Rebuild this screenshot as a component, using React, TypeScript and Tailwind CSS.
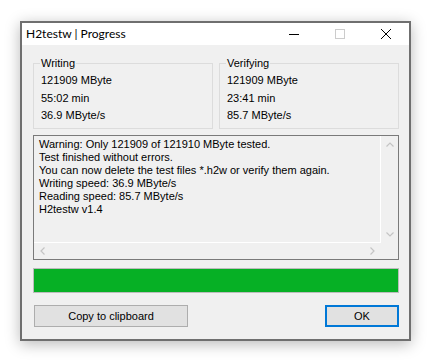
import React from "react";

const Chevron = ({ dir }: { dir: "up" | "down" | "left" | "right" }) => {
  const paths: Record<string, string> = {
    up: "M0.5 4.5 L4 1 L7.5 4.5",
    down: "M0.5 0.5 L4 4 L7.5 0.5",
    left: "M4.5 0.5 L1 4 L4.5 7.5",
    right: "M0.5 0.5 L4 4 L0.5 7.5",
  };
  const horiz = dir === "up" || dir === "down";
  return (
    <svg
      width={horiz ? 8 : 5}
      height={horiz ? 5 : 8}
      viewBox={horiz ? "0 0 8 5" : "0 0 5 8"}
      fill="none"
      stroke="#c4c4c4"
      strokeWidth="1.2"
    >
      <path d={paths[dir]} />
    </svg>
  );
};

const GroupBox = ({ title, lines }: { title: string; lines: string[] }) => (
  <fieldset className="w-[180px] h-[72px] border border-[#dcdcdc] px-[7px]">
    <legend className="ml-[-1px] px-[1px] leading-[13px]">{title}</legend>
    <div className="pt-[2px]">
      {lines.map((l) => (
        <div key={l} className="leading-[17.5px]">
          {l}
        </div>
      ))}
    </div>
  </fieldset>
);

export default function App() {
  const log = [
    "Warning: Only 121909 of 121910 MByte tested.",
    "Test finished without errors.",
    "You can now delete the test files *.h2w or verify them again.",
    "Writing speed: 36.9 MByte/s",
    "Reading speed: 85.7 MByte/s",
    "H2testw v1.4",
  ];
  return (
    <div className="w-[431px] h-[361px] bg-white pl-[20px] pt-[21px] overflow-hidden">
      <div className="w-[391px] h-[320px] border-2 border-[#6f6f6f] bg-[#f0f0f0] shadow-[0_3px_14px_rgba(0,0,0,0.28)] flex flex-col text-black">
        {/* Title bar */}
        <div className="h-[22px] bg-white flex items-center">
          <div className="pl-[4px] flex-1 text-[12px] leading-[22px] font-['Lato',sans-serif]">
            H2testw | Progress
          </div>
          <div className="w-[46px] h-[22px] flex items-center justify-center">
            <div className="w-[10px] h-[1px] bg-black" />
          </div>
          <div className="w-[46px] h-[22px] flex items-center justify-center">
            <div className="w-[10px] h-[10px] border border-[#cccccc]" />
          </div>
          <div className="w-[46px] h-[22px] flex items-center justify-center">
            <svg width="10" height="10" viewBox="0 0 10 10" stroke="#000" strokeWidth="1" fill="none">
              <path d="M0 0 L10 10 M10 0 L0 10" />
            </svg>
          </div>
        </div>

        {/* Body */}
        <div className="flex-1 pl-[11px] pr-[10px] pt-[12px] text-[11px] font-['Liberation_Sans',Arial,sans-serif]">
          <div className="flex gap-[6px]">
            <GroupBox title="Writing" lines={["121909 MByte", "55:02 min", "36.9 MByte/s"]} />
            <GroupBox title="Verifying" lines={["121909 MByte", "23:41 min", "85.7 MByte/s"]} />
          </div>

          {/* Log box */}
          <div className="mt-[6px] w-[366px] h-[125px] border border-[#7a7a7a] grid grid-cols-[347px_17px] grid-rows-[107px_16px]">
            <div className="border-r border-b border-white pl-[5px] pt-[2px] overflow-hidden whitespace-nowrap">
              {log.map((l) => (
                <div key={l} className="leading-[13px]">
                  {l}
                </div>
              ))}
            </div>
            <div className="flex flex-col justify-between">
              <div className="h-[17px] flex items-center justify-center">
                <Chevron dir="up" />
              </div>
              <div className="h-[17px] flex items-center justify-center">
                <Chevron dir="down" />
              </div>
            </div>
            <div className="flex justify-between">
              <div className="w-[17px] flex items-center justify-center">
                <Chevron dir="left" />
              </div>
              <div className="w-[17px] flex items-center justify-center">
                <Chevron dir="right" />
              </div>
            </div>
            <div />
          </div>

          {/* Progress bar */}
          <div className="mt-[8px] w-[366px] h-[25px] border border-[#bcbcbc] bg-[#e6e6e6]">
            <div className="h-full bg-[#06b025]" style={{ width: "100%" }} />
          </div>

          {/* Buttons */}
          <div className="mt-[12px] flex justify-between">
            <button className="ml-[1px] w-[154px] h-[22px] border border-[#adadad] bg-[#e1e1e1] text-[11px] leading-[20px]">
              Copy to clipboard
            </button>
            <button className="w-[74px] h-[22px] border-2 border-[#0078d7] bg-[#e1e1e1] text-[11px] leading-[18px]">
              OK
            </button>
          </div>
        </div>
      </div>
    </div>
  );
}
